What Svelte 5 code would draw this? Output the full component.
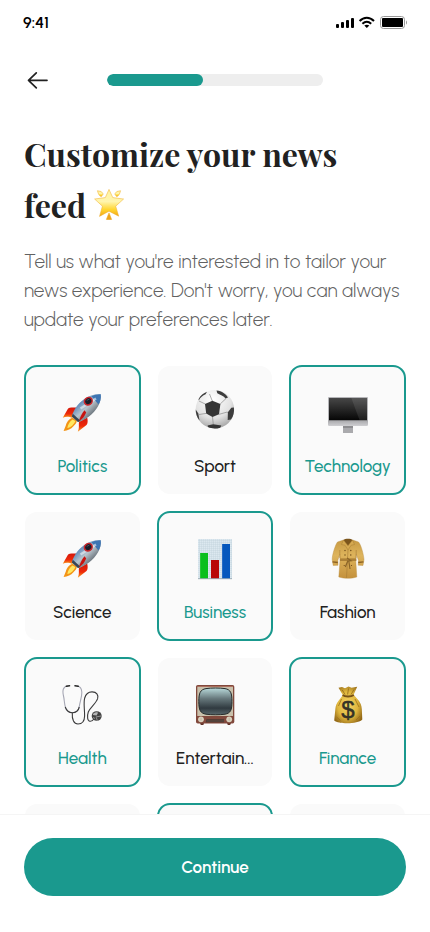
<script>
	const step = 4;
	const steps = 9;

	let topics = $state([
		{ label: 'Politics', icon: 'rocket', selected: true },
		{ label: 'Sport', icon: 'ball', selected: false },
		{ label: 'Technology', icon: 'computer', selected: true },
		{ label: 'Science', icon: 'rocket', selected: false },
		{ label: 'Business', icon: 'chart', selected: true },
		{ label: 'Fashion', icon: 'coat', selected: false },
		{ label: 'Health', icon: 'stethoscope', selected: true },
		{ label: 'Entertain...', icon: 'tv', selected: false },
		{ label: 'Finance', icon: 'bag', mark: '$', selected: true }
	]);

	// next row, still loading
	const upcoming = [false, true, false];
</script>

<svg class="sprite" aria-hidden="true">
	<defs>
		<linearGradient id="hull" x1="0" y1="0" x2="1" y2="1">
			<stop offset="0.2" stop-color="#3b75b5" />
			<stop offset="0.5" stop-color="#b9c4cc" />
			<stop offset="0.8" stop-color="#4c545c" />
		</linearGradient>
		<linearGradient id="fin" x1="0" y1="0" x2="0" y2="1">
			<stop offset="0" stop-color="#d3170b" />
			<stop offset="0.6" stop-color="#ee2a0a" />
			<stop offset="1" stop-color="#f9a11c" />
		</linearGradient>
		<radialGradient id="leather" cx="0.45" cy="0.25" r="0.8">
			<stop offset="0" stop-color="#ffffff" />
			<stop offset="0.6" stop-color="#e2e2e2" />
			<stop offset="1" stop-color="#9c9c9c" />
		</radialGradient>
		<linearGradient id="screen" x1="0" y1="0" x2="0" y2="1">
			<stop offset="0" stop-color="#474747" />
			<stop offset="1" stop-color="#050505" />
		</linearGradient>
		<linearGradient id="metal" x1="0" y1="0" x2="0" y2="1">
			<stop offset="0" stop-color="#a9a9ac" />
			<stop offset="1" stop-color="#cfcfd2" />
		</linearGradient>
		<linearGradient id="cloth" x1="0" y1="0" x2="0" y2="1">
			<stop offset="0" stop-color="#c79a43" />
			<stop offset="0.4" stop-color="#deb45c" />
			<stop offset="1" stop-color="#c4913c" />
		</linearGradient>
		<linearGradient id="tube" x1="0" y1="0" x2="0" y2="1">
			<stop offset="0" stop-color="#b9dadb" />
			<stop offset="0.4" stop-color="#66777b" />
			<stop offset="0.75" stop-color="#303a40" />
			<stop offset="1" stop-color="#59686c" />
		</linearGradient>
		<radialGradient id="gold" cx="0.48" cy="0.5" r="0.6">
			<stop offset="0" stop-color="#f5d568" />
			<stop offset="0.6" stop-color="#dfb63d" />
			<stop offset="1" stop-color="#936817" />
		</radialGradient>
		<linearGradient id="star" x1="0" y1="0" x2="0" y2="1">
			<stop offset="0" stop-color="#fff3a0" />
			<stop offset="0.45" stop-color="#fff5ae" />
			<stop offset="0.75" stop-color="#ffd52f" />
			<stop offset="1" stop-color="#f2a515" />
		</linearGradient>
		<pattern id="graph" width="2" height="2" patternUnits="userSpaceOnUse">
			<rect width="2" height="2" fill="#dce8f0" />
			<path d="M0 0H2M0 0V2" stroke="#bccbd6" stroke-width="0.6" />
		</pattern>
	</defs>

	<symbol id="rocket" viewBox="0 0 40 44">
		<path d="M14.8 17.5C10 17.2 6.5 17.4 5.8 19L.8 27.7C4 26 7.5 26.5 10.3 28Z" fill="url(#fin)" />
		<path d="M25.2 27.5C26 31 25.8 33.5 24.5 35L15.8 41.7C17.6 38 16.5 34.5 17 32Z" fill="url(#fin)" />
		<path d="M10.8 27.8C6.5 29 4.5 33 3.8 35.5L1.6 41C5.5 40.8 9.2 39 11.2 36.6C13.2 34.5 14.7 33 14.9 30.5Z" fill="#f39416" />
		<path d="M10.5 29.5C7.5 31.5 6 34.5 5.3 38C8.8 37.5 12 34.5 13.4 31Z" fill="#ffe861" />
		<path d="M38.8 4.3C39.8 12 34.5 21 27 26.5C22 30 18 31.8 16 32L9.8 26.5C11 21.5 15 14 22 9.2C27.5 5.3 33.5 3.6 38.8 4.3Z" fill="url(#hull)" />
		<path d="M38.8 4.3C39.3 8.2 38.2 12 36.5 14.6L29.5 6.3C32.5 4.6 36 3.9 38.8 4.3Z" fill="#3d75b3" />
		<path d="M18.5 18.5L34 8.5" stroke="#f2f5f7" stroke-width="2.4" opacity="0.6" />
		<path d="M9.8 26.5L16 32L18.7 31L10.8 23.8Z" fill="#394654" />
		<path d="M22.5 20.2C20.2 22.5 18 27.5 16.8 31.3C20.5 29 22.8 26 24.2 22.4Z" fill="#c81410" />
		<ellipse cx="26.3" cy="11.2" rx="4.8" ry="4.3" transform="rotate(-35 26.3 11.2)" fill="#c9252a" />
		<ellipse cx="26.3" cy="11.2" rx="3.2" ry="2.8" transform="rotate(-35 26.3 11.2)" fill="#171e29" />
		<path d="M24.7 10.5L27.4 9" stroke="#53616e" stroke-width="0.8" />
	</symbol>

	<symbol id="ball" viewBox="0 0 40 44">
		<circle cx="19.9" cy="19.3" r="19.2" fill="url(#leather)" />
		<g fill="none" stroke="#8a8a8a" stroke-width="0.7">
			<path d="M10.2 14L4 11M25.2 14L31 8.5M23.8 24.4L32.3 22M17.5 26.9L18.3 34.5M11.2 23.4L4 24.5" />
			<path d="M17.3 11L14.5 4" />
		</g>
		<path d="M17.4 10.8L25.4 14L24 24.3L17.5 27L11.2 23.6L10 13.9Z" fill="#353535" />
		<path d="M21.5.5C27 1 31 4 33 7.5L30.7 8.4C28 5.5 24.5 4.7 22.3 3.3Z" fill="#3d3d3d" />
		<path d="M3.5 9.2C5.5 5.5 8.5 3 12 1.8L10.6 4.2C7.8 5.3 5.2 7.5 3.9 10.3Z" fill="#3d3d3d" />
		<path d="M.7 19.5L3.3 23.4L4.5 30.5C1.8 27.3.6 23.3.7 19.5Z" fill="#3d3d3d" />
		<path d="M36.3 17.8L38.9 17.5C39.5 22 38.3 26.3 36 29.5L32.7 30L32.9 22.2Z" fill="#3d3d3d" />
		<path d="M12.6 35.4L18.2 34.3L26.3 35.6L25.2 37.7C21 39 16.7 38.8 13 37.1Z" fill="#353535" />
	</symbol>

	<symbol id="computer" viewBox="0 0 40 44">
		<rect x="15" y="35" width="10" height="8" fill="#aaaaad" />
		<path d="M15 36H25V38H15Z" fill="#8d8d90" />
		<rect x="0" y="7" width="40" height="25" rx="1" fill="#b5b5b8" />
		<rect x="1" y="8" width="38" height="22.5" fill="url(#screen)" />
		<path d="M23.3 8H39V30.5H31.7Z" fill="#fff" opacity="0.09" />
		<path d="M0 30.5H40V34.7Q40 36 38.7 36H1.3Q0 36 0 34.7Z" fill="url(#metal)" />
	</symbol>

	<symbol id="chart" viewBox="0 0 40 44">
		<rect x="3" y="3" width="34" height="40" fill="url(#graph)" />
		<rect x="5" y="17" width="8" height="25.5" fill="#0abf1d" />
		<rect x="16" y="24" width="8" height="18.5" fill="#b90808" />
		<rect x="27" y="8" width="8" height="34.5" fill="#0758bd" />
		<path d="M5 17V42.5M27 8V42.5" stroke="#fff" stroke-width="0.5" opacity="0.5" />
		<path d="M3 42.7H37" stroke="#8899a4" stroke-width="0.7" />
	</symbol>

	<symbol id="coat" viewBox="0 0 40 44">
		<path d="M15.5 4L9.5 6C7.5 8.5 4.3 18 4.2 23.5L5.2 29.5L10 29.3L9.8 24.5L11.8 18L12 25L10.8 41C16 42.8 24 42.8 28.8 41L27.8 25L28.2 18L30.5 24.5L30.2 29.2L35 29.5L36 23.5C35.5 18 33 8.5 30.5 6L24.5 4Z" fill="url(#cloth)" stroke="#b98b3d" stroke-width="0.4" />
		<path d="M15.5 4C17 2.2 23 2.2 24.5 4L23.3 7L20 10L16.8 7Z" fill="#7b551c" />
		<path d="M15.5 4L13.5 8.5L17 9.2L20 14L23.2 9.2L26.5 8.5L24.5 4L20 9.8Z" fill="#d5a951" stroke="#a67c33" stroke-width="0.5" />
		<path d="M11.8 14V22M28.2 14V22M20 14L18.5 41.8" stroke="#a67a34" stroke-width="0.6" />
		<path d="M12 22.4H28.3V25H12Z" fill="#ac8036" />
		<path d="M19 22L23 24.8L20.8 25L22 33M20 24.5L17.3 31" fill="none" stroke="#8b6528" stroke-width="1.2" />
		<path d="M4.5 25.8L9.8 26.5M30.2 26.5L35.5 25.8" stroke="#8b6124" stroke-width="1.3" />
		<g fill="#6b4818">
			<circle cx="17" cy="14.5" r="0.7" />
			<circle cx="22.8" cy="14.5" r="0.7" />
			<circle cx="17" cy="19" r="0.7" />
			<circle cx="22.8" cy="19" r="0.7" />
			<circle cx="16.2" cy="29.5" r="0.6" />
			<circle cx="23.5" cy="29.5" r="0.6" />
		</g>
	</symbol>

	<symbol id="stethoscope" viewBox="0 0 40 44">
		<path d="M5.8 4C1 4.5.3 8.5 1.4 13.5C2.6 18 2 22 3.8 26.5C5.5 29.8 7.5 30.7 10.3 30.7C14 30.7 16.6 28.8 17.4 24C17.8 20 20 15.5 19.8 10C19.6 6 18.2 4.3 14.7 4" fill="none" stroke="#a6a7b4" stroke-width="1.1" />
		<path d="M3.2 25C4.7 29 6.6 30.7 10.3 30.7C14 30.7 16.4 28.8 17.3 25M10.3 30.7C9.8 38 12 42 16 42C20.5 42 22.5 39 22.6 34C22.7 27 21.3 21 22.7 16C24 11.5 27 9.8 30.2 9.9C34.5 10 36.7 12.8 35.6 16.7C34 21.7 28.3 25 26.3 30C24.8 34.5 25.5 39 28 39.3C30 39.5 31.2 38.2 32.2 36.5" fill="none" stroke="#3b3b3c" stroke-width="1.1" />
		<path d="M4.4 4.3L7.5 3.8M13 3.8L16.2 4.3" stroke="#292929" stroke-width="1.6" stroke-linecap="round" />
		<ellipse cx="34.7" cy="34" rx="5" ry="4.8" fill="#434343" />
		<path d="M30.8 33C31.3 30.7 34 29.7 36 30.7L34.7 33.5Z" fill="#b6b6b6" />
		<path d="M33.8 35L39 34M34.3 35.5L35.3 38.5M31 35.5L33 36.5" stroke="#aaa" stroke-width="0.8" />
	</symbol>

	<symbol id="tv" viewBox="0 0 40 44">
		<path d="M5 41H9L8.4 43H5.8ZM32 41H36L35.2 43H32.8Z" fill="#5f3027" />
		<rect x="1" y="3" width="38.3" height="38.6" rx="1.8" fill="#81493c" />
		<rect x="2.3" y="5" width="35.7" height="29" fill="#c9c1ac" />
		<path d="M2.3 4.5H38" stroke="#b97868" stroke-width="0.8" />
		<path d="M11 6.6C16 5.8 25 5.8 30 6.6C35.6 7.6 37 11 37 19.5C37 28 35.6 31.2 30 32.2C25 33 16 33 11 32.2C5.2 31.2 3.8 28 3.8 19.5C3.8 11 5.2 7.6 11 6.6Z" fill="url(#tube)" stroke="#262b2a" stroke-width="1" />
		<path d="M11.5 37.3H29V40.2H10.8Z" fill="#3f302b" />
		<path d="M11.5 38.2H29M11.3 39.3H29" stroke="#826a60" stroke-width="0.4" />
		<circle cx="6" cy="37.3" r="2.9" fill="#d8d1be" />
		<circle cx="34.2" cy="37.3" r="2.9" fill="#d8d1be" />
		<path d="M6 35.8V38.7M34.2 35.8V38.7" stroke="#a39b8a" stroke-width="0.5" />
	</symbol>

	<symbol id="bag" viewBox="0 0 40 44">
		<path d="M10.5 5.8L14 5L17 6.2L20.5 4.5L23.6 5.8L29.2 4.8L25.6 12.8C29 17 33.5 20 33.8 27L34.3 37.5C30 42.2 11 42.5 6.2 38.5L7.4 26.5C8 20.5 12 17.5 14.8 13Z" fill="url(#gold)" />
		<path d="M14.3 8L17 12.5M20.5 6.5L19.6 12.5M26 7.5L23 12.5" stroke="#916819" stroke-width="0.8" />
		<path d="M14.6 13C17 15 23 15 25.8 13" fill="none" stroke="#775118" stroke-width="1.8" />
		<path d="M13.5 17L10.5 24M27 17L31 25M8.5 35L12.5 38.5M32 34L28 38" stroke="#9c701b" stroke-width="0.8" />
	</symbol>
</svg>

<div class="screen">
	<div class="status">
		<span>9:41</span>
		<svg width="72" height="14" viewBox="0 0 72 14" aria-hidden="true">
			<rect x="1" y="9" width="3" height="4" rx="1" />
			<rect x="6" y="7" width="3" height="6" rx="1" />
			<rect x="11" y="5" width="3" height="8" rx="1" />
			<rect x="16" y="3" width="3" height="10" rx="1" />
			<g fill="none" stroke="#000" stroke-width="2">
				<path d="M24.6 6C28.9 1.6 34.7 1.6 39 6" />
				<path d="M27.4 8.8C30.1 6.2 33.5 6.2 36.2 8.8" />
			</g>
			<path d="M29.3 10.6C30.8 9.3 32.8 9.3 34.3 10.6L31.8 13.1Z" />
			<rect x="45.5" y="1.5" width="24" height="12" rx="3" fill="none" stroke="#999" />
			<rect x="47" y="3" width="21" height="9" rx="1" />
			<path d="M71 5.5C72.3 6.2 72.3 8.8 71 9.5Z" fill="#999" />
		</svg>
	</div>

	<header>
		<button class="back" aria-label="Back">
			<svg width="28" height="28" viewBox="0 0 28 28" fill="none" stroke="#212121" stroke-width="1.7" stroke-linecap="round" stroke-linejoin="round">
				<path d="M23 14.3H4.5M12.3 6.8L4.5 14.3L12.3 21.8" />
			</svg>
		</button>
		<div class="progress" role="progressbar" aria-valuemin="0" aria-valuemax={steps} aria-valuenow={step} aria-label="Setup">
			<div class="bar" style="width: {(step / steps) * 100}%"></div>
		</div>
	</header>

	<main>
		<h1>
			Customize your news feed
			<svg class="star" viewBox="0 0 31 31" aria-hidden="true">
				<g fill="url(#star)" stroke="#eead2b" stroke-width="0.5" stroke-linejoin="round">
					<path d="M15 .4L18.8 8.6L29.6 10L21.7 17.2L24.7 27.2L15 22.2L5.5 27.4L8.4 17.2L.6 10L11.3 8.6Z" />
					<path d="M3.4 1.7Q8 1.7 9.3 5L7.2 7.8Q4 6 3.4 1.7Z" />
					<path d="M26.6 1.7Q22 1.7 20.7 5L22.8 7.8Q26 6 26.6 1.7Z" />
					<path d="M15 23.8L12.3 30.5Q15 31.2 17.7 30.5Z" fill="#eca31a" />
				</g>
			</svg>
		</h1>
		<p>Tell us what you're interested in to tailor your news experience. Don't worry, you can always update your preferences later.</p>

		<div class="topics">
			{#each topics as topic}
				<button class="topic" class:selected={topic.selected} aria-pressed={topic.selected} onclick={() => (topic.selected = !topic.selected)}>
					<svg width="40" height="44" aria-hidden="true">
						<use href="#{topic.icon}" />
						{#if topic.mark}
							<text class="mark" x="20" y="36" text-anchor="middle">{topic.mark}</text>
						{/if}
					</svg>
					<span>{topic.label}</span>
				</button>
			{/each}
			{#each upcoming as selected}
				<div class="topic" class:selected></div>
			{/each}
		</div>
	</main>

	<footer>
		<button class="continue">Continue</button>
	</footer>
</div>

<style>
	:global(body) {
		margin: 0;
		background: #fff;
	}
	.sprite {
		position: absolute;
		width: 0;
		height: 0;
	}

	.screen {
		--teal: #1a998e;
		--ink: #212121;
		display: flex;
		flex-direction: column;
		height: 100vh;
		color: var(--ink);
		font-family: Urbanist, Lato, 'Open Sans', sans-serif;
	}
	button {
		border: 0;
		padding: 0;
		font-family: inherit;
		cursor: pointer;
	}

	.status {
		display: flex;
		align-items: center;
		justify-content: space-between;
		flex: none;
		height: 44px;
		padding: 0 23px;
		color: #000;
		font-size: 16px;
		font-weight: 600;
	}

	header {
		display: grid;
		grid-template-columns: 1fr 216px 1fr;
		align-items: center;
		flex: none;
		height: 72px;
		padding: 0 24px;
	}
	.back {
		display: flex;
		justify-self: start;
		background: none;
	}
	.progress {
		height: 12px;
		border-radius: 6px;
		background: #eee;
		overflow: hidden;
	}
	.bar {
		height: 100%;
		border-radius: 6px;
		background: var(--teal);
	}

	main {
		flex: 1;
		min-height: 0;
		padding: 12px 24px 24px;
		overflow-y: auto;
		scrollbar-width: none;
	}
	h1 {
		margin: 0 0 17px;
		font-family: 'Playfair Display', 'Liberation Serif', serif;
		font-size: 32px;
		font-weight: 700;
		line-height: 51px;
	}
	.star {
		width: 31px;
		height: 31px;
		vertical-align: -2px;
	}
	p {
		margin: 0 0 31px;
		color: #616161;
		font-size: 19px;
		font-weight: 300;
		line-height: 29px;
	}

	.topics {
		display: grid;
		grid-template-columns: repeat(3, minmax(0, 1fr));
		gap: 18px;
		padding: 1px;
	}
	.topic {
		display: flex;
		flex-direction: column;
		align-items: center;
		gap: 20px;
		box-sizing: border-box;
		min-height: 128px;
		padding: 24px 8px 16px;
		border-radius: 12px;
		background: #fafafa;
		color: var(--ink);
		font-size: 17px;
		font-weight: 500;
		line-height: 24px;
	}
	.topic.selected {
		outline: 2px solid var(--teal);
		outline-offset: -1px;
		color: var(--teal);
	}
	.mark {
		font: 24px 'Liberation Sans', sans-serif;
		fill: #363226;
		stroke: #363226;
		stroke-width: 0.5;
	}

	footer {
		flex: none;
		padding: 23px 24px 36px;
		border-top: 1px solid #f5f5f5;
		background: #fff;
	}
	.continue {
		width: 100%;
		height: 58px;
		border-radius: 29px;
		background: var(--teal);
		color: #fff;
		font-size: 17px;
		font-weight: 600;
	}
</style>
